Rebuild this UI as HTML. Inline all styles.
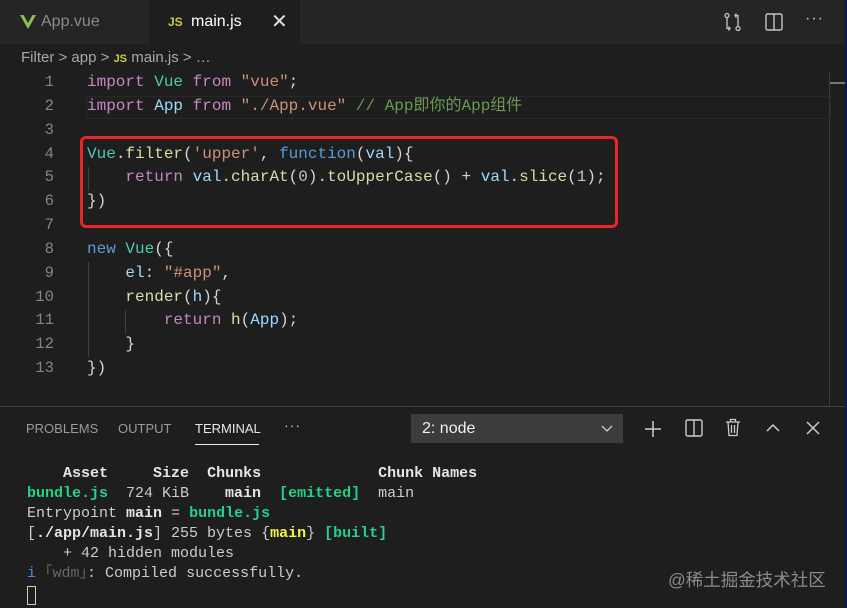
<!DOCTYPE html>
<html><head><meta charset="utf-8"><style>
*{margin:0;padding:0;box-sizing:border-box}
body{width:847px;height:608px;background:#1e1e1e;position:relative;overflow:hidden;font-family:"Liberation Sans","Noto Sans CJK SC",sans-serif}
.abs{position:absolute}
.mono{font-family:"Liberation Mono","Noto Sans CJK SC",monospace}
.code>div{position:relative;height:23.85px}
.code>div>span{white-space:pre}
.k{color:#c586c0}.v{color:#9cdcfe}.t{color:#4ec9b0}.s{color:#ce9178}.f{color:#569cd6}.m{color:#dcdcaa}.n{color:#b5cea8}.c{color:#6a9955}.d{color:#d4d4d4}
.ln{position:absolute;left:0;width:54px;text-align:right;color:#858585;font-size:15.6px}
.cd{position:absolute;left:87px}
.tl{color:#cccccc;white-space:pre}
.g{color:#23d18b;font-weight:bold}.b{font-weight:bold;color:#e5e5e5}.y{color:#f5f543;font-weight:bold}
</style></head><body>
<div class="abs" style="left:0;top:0;width:847px;height:44px;background:#252526"></div>
<div class="abs" style="left:150px;top:0;width:150px;height:44px;background:#1e1e1e"></div>
<svg class="abs" style="left:20px;top:15px" width="16" height="14" viewBox="0 0 16 14"><path d="M0 0h3.5L8 8 12.5 0H16L8 14z" fill="#8dc149"/></svg>
<div class="abs" style="left:41px;top:13px;font-size:16px;color:#8b8b8b">App.vue</div>
<div class="abs" style="left:168px;top:15px;font-size:12px;font-weight:bold;color:#cbcb41">JS</div>
<div class="abs" style="left:191px;top:13px;font-size:16px;color:#ffffff">main.js</div>
<div class="abs" style="left:271px;top:9px;font-size:20px;color:#e0e0e0">✕</div>
<svg class="abs" style="left:723px;top:12px" width="20" height="20" viewBox="0 0 20 20" fill="none" stroke="#c5c5c5" stroke-width="1.3"><circle cx="4" cy="3.5" r="2"/><circle cx="15" cy="16.5" r="2"/><path d="M4 5.5v11h3M5.5 14.5l1.5 2-1.5 2M15 14.5v-11h-3M13.5 1.5 12 3.5l1.5 2"/></svg>
<svg class="abs" style="left:765px;top:13px" width="18" height="18" viewBox="0 0 18 18" fill="none" stroke="#c5c5c5" stroke-width="1.4"><rect x="1" y="1" width="16" height="16" rx="1.5"/><path d="M9 1v16"/></svg>
<div class="abs" style="left:805px;top:10px;font-size:16px;color:#c5c5c5;letter-spacing:1px">···</div>
<div class="abs" style="left:21px;top:49px;font-size:15px;color:#a9a9a9">Filter &gt; app &gt; <span style="color:#cbcb41;font-size:11px;font-weight:bold">JS</span> main.js &gt; …</div>
<div class="abs" style="left:86px;top:96px;width:745px;height:23px;border:1px solid #282828"></div>
<div class="abs" style="left:829px;top:72px;width:1px;height:334px;background:#3a3a3a"></div>
<div class="abs" style="left:830px;top:82px;width:17px;height:2px;background:#777"></div>
<div class="abs" style="left:88px;top:167px;width:1px;height:24px;background:#404040"></div>
<div class="abs" style="left:88px;top:262px;width:1px;height:95px;background:#404040"></div>
<div class="abs" style="left:125px;top:310px;width:1px;height:24px;background:#404040"></div>
<div class="abs mono code" style="left:0;top:71px;font-size:16px;line-height:23.85px;width:847px">
<div><span class="ln">1</span><span class="cd"><span class="k">import</span> <span class="t">Vue</span> <span class="k">from</span> <span class="s">"vue"</span><span class="d">;</span></span></div>
<div><span class="ln">2</span><span class="cd"><span class="k">import</span> <span class="v">App</span> <span class="k">from</span> <span class="s">"./App.vue"</span> <span class="c">// App即你的App组件</span></span></div>
<div><span class="ln">3</span></div>
<div><span class="ln">4</span><span class="cd"><span class="t">Vue</span><span class="d">.</span><span class="m">filter</span><span class="d">(</span><span class="s">'upper'</span><span class="d">, </span><span class="f">function</span><span class="d">(</span><span class="v">val</span><span class="d">){</span></span></div>
<div><span class="ln">5</span><span class="cd">    <span class="k">return</span> <span class="v">val</span><span class="d">.</span><span class="m">charAt</span><span class="d">(</span><span class="n">0</span><span class="d">).</span><span class="m">toUpperCase</span><span class="d">() + </span><span class="v">val</span><span class="d">.</span><span class="m">slice</span><span class="d">(</span><span class="n">1</span><span class="d">);</span></span></div>
<div><span class="ln">6</span><span class="cd d">})</span></div>
<div><span class="ln">7</span></div>
<div><span class="ln">8</span><span class="cd"><span class="f">new</span> <span class="t">Vue</span><span class="d">({</span></span></div>
<div><span class="ln">9</span><span class="cd">    <span class="v">el</span><span class="d">: </span><span class="s">"#app"</span><span class="d">,</span></span></div>
<div><span class="ln">10</span><span class="cd">    <span class="m">render</span><span class="d">(</span><span class="v">h</span><span class="d">){</span></span></div>
<div><span class="ln">11</span><span class="cd">        <span class="k">return</span> <span class="m">h</span><span class="d">(</span><span class="v">App</span><span class="d">);</span></span></div>
<div><span class="ln">12</span><span class="cd d">    }</span></div>
<div><span class="ln">13</span><span class="cd d">})</span></div>
</div>
<div class="abs" style="left:80px;top:136px;width:538px;height:92px;border:3px solid #e8262a;border-radius:6px"></div>
<div class="abs" style="left:0;top:406px;width:847px;height:202px;background:#1e1e1e;border-top:1px solid #444"></div>
<div class="abs" style="left:26px;top:421px;font-size:13px;color:#9a9a9a">PROBLEMS</div>
<div class="abs" style="left:118px;top:421px;font-size:13px;color:#9a9a9a">OUTPUT</div>
<div class="abs" style="left:195px;top:421px;font-size:13px;color:#e7e7e7">TERMINAL</div>
<div class="abs" style="left:195px;top:444px;width:64px;height:1px;background:#e7e7e7"></div>
<div class="abs" style="left:284px;top:417px;font-size:14px;color:#ccc;letter-spacing:1px">···</div>
<div class="abs" style="left:411px;top:414px;width:212px;height:29px;background:#3c3c3c"></div>
<div class="abs" style="left:422px;top:420px;font-size:16px;color:#f0f0f0">2: node</div>
<svg class="abs" style="left:600px;top:424px" width="14" height="10" viewBox="0 0 14 10" fill="none" stroke="#ccc" stroke-width="1.3"><path d="M2 2l5 5 5-5"/></svg>
<svg class="abs" style="left:643px;top:419px" width="20" height="20" viewBox="0 0 20 20" stroke="#ccc" stroke-width="1.5"><path d="M10 2v16M2 10h16"/></svg>
<svg class="abs" style="left:685px;top:419px" width="18" height="18" viewBox="0 0 18 18" fill="none" stroke="#ccc" stroke-width="1.4"><rect x="1" y="1" width="16" height="16" rx="1.5"/><path d="M9 1v16"/></svg>
<svg class="abs" style="left:725px;top:418px" width="16" height="19" viewBox="0 0 16 19" fill="none" stroke="#ccc" stroke-width="1.3"><path d="M1 4h14M5.5 4V1.5h5V4M3 4l1 13.5h8L13 4M6.5 7v8M9.5 7v8"/></svg>
<svg class="abs" style="left:765px;top:422px" width="16" height="12" viewBox="0 0 16 12" fill="none" stroke="#ccc" stroke-width="1.5"><path d="M2 9l6-6 6 6"/></svg>
<svg class="abs" style="left:806px;top:421px" width="14" height="14" viewBox="0 0 14 14" stroke="#ccc" stroke-width="1.5"><path d="M1 1l12 12M13 1L1 13"/></svg>
<div class="abs mono tl" style="left:27px;top:464px;font-size:15px;line-height:20px">    <span class="b">Asset</span>     <span class="b">Size</span>  <span class="b">Chunks</span>             <span class="b">Chunk Names</span>
<span class="g">bundle.js</span>  724 KiB    <span class="b">main</span>  <span class="g">[emitted]</span>  main
Entrypoint <span class="b">main</span> = <span class="g">bundle.js</span>
[<span class="b">./app/main.js</span>] 255 bytes {<span class="y">main</span>} <span class="g">[built]</span>
    + 42 hidden modules
<span style="color:#3b8eea">i</span> <span style="color:#666">｢wdm｣</span>: Compiled successfully.</div>
<div class="abs" style="left:27px;top:586px;width:9px;height:19px;border:1px solid #ccc"></div>
<div class="abs" style="left:668px;top:567px;font-size:17.5px;color:#8a8a8a">@稀土掘金技术社区</div>
<div class="abs" style="left:845px;top:0;width:2px;height:608px;background:#0a1a4a"></div>
</body></html>
